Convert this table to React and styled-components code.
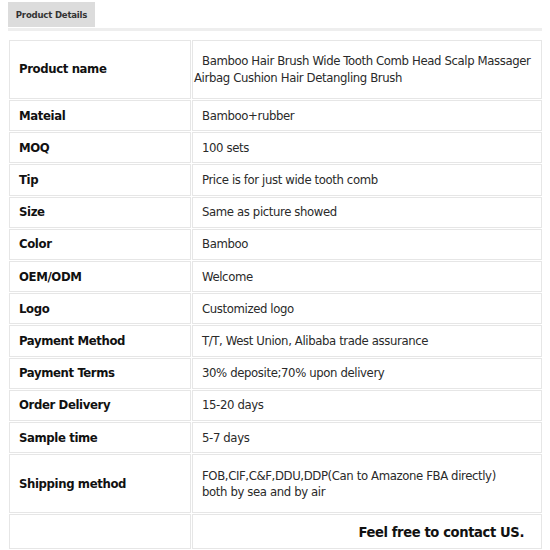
import { createGlobalStyle, styled } from "styled-components";

const GlobalStyle = createGlobalStyle`
    body {
        margin: 0 8px;
        padding-top: 2px;
        background: #fff;
        font-family: "DejaVu Sans Condensed", "DejaVu Sans", Verdana, sans-serif;
        letter-spacing: -0.38px;
        color: #333;
    }
`;

const TabBar = styled.div`
    display: flex;
    border-bottom: 3px solid #eeeeee;
    margin-bottom: 8px;
`;

const Tab = styled.div`
    background-color: #dcdcdc;
    color: #333;
    font-size: 9.5px;
    font-weight: 700;
    letter-spacing: -0.2px;
    white-space: nowrap;
    width: 87px;
    height: 25px;
    display: flex;
    align-items: center;
    justify-content: center;
    margin-bottom: 1px;
`;

const SpecTable = styled.table`
    width: 535px;
    border-collapse: separate;
    border-spacing: 1px;
    font-size: 13px;
    line-height: 16.2px;
`;

const Cell = styled.td`
    border: 1px solid #e6e6e6;
    padding: 6.5px 9px;
    height: ${(props) => (props.$tall ? "44px" : props.$footer ? "20px" : "auto")};
    vertical-align: middle;
`;

const LabelCell = styled(Cell)`
    width: 162px;
    font-weight: 700;
    color: #111;
`;

const ValueCell = styled(Cell)`
    color: #2a2a2a;
    padding-left: ${(props) => (props.$flush ? "1px" : "9px")};
    padding-right: ${(props) => (props.$flush ? "3px" : "9px")};
    text-indent: ${(props) => (props.$flush ? "8px" : "0")};
`;

const ContactCell = styled(Cell)`
    text-align: right;
    padding-right: 17px;
    font-size: 14.6px;
    font-weight: 700;
    color: #111;
`;

const rows = [
    ["Mateial", "Bamboo+rubber"],
    ["MOQ", "100 sets"],
    ["Tip", "Price is for just wide tooth comb"],
    ["Size", "Same as picture showed"],
    ["Color", "Bamboo"],
    ["OEM/ODM", "Welcome"],
    ["Logo", "Customized logo"],
    ["Payment Method", "T/T, West Union, Alibaba trade assurance"],
    ["Payment Terms", "30% deposite;70% upon delivery"],
    ["Order Delivery", "15-20 days"],
    ["Sample time", "5-7 days"],
];

function App() {
    return (
        <>
            <GlobalStyle />
            <TabBar>
                <Tab>Product Details</Tab>
            </TabBar>
            <SpecTable>
                <tbody>
                    <tr>
                        <LabelCell $tall>Product name</LabelCell>
                        <ValueCell $tall $flush>
                            Bamboo Hair Brush Wide Tooth Comb Head Scalp Massager Airbag
                            Cushion Hair Detangling Brush
                        </ValueCell>
                    </tr>
                    {rows.map(([label, value]) => (
                        <tr key={label}>
                            <LabelCell>{label}</LabelCell>
                            <ValueCell>{value}</ValueCell>
                        </tr>
                    ))}
                    <tr>
                        <LabelCell $tall>Shipping method</LabelCell>
                        <ValueCell $tall>
                            FOB,CIF,C&amp;F,DDU,DDP(Can to Amazone FBA directly)
                            <br />
                            both by sea and by air
                        </ValueCell>
                    </tr>
                    <tr>
                        <LabelCell $footer />
                        <ContactCell $footer>Feel free to contact US.</ContactCell>
                    </tr>
                </tbody>
            </SpecTable>
        </>
    );
}

export default App;
